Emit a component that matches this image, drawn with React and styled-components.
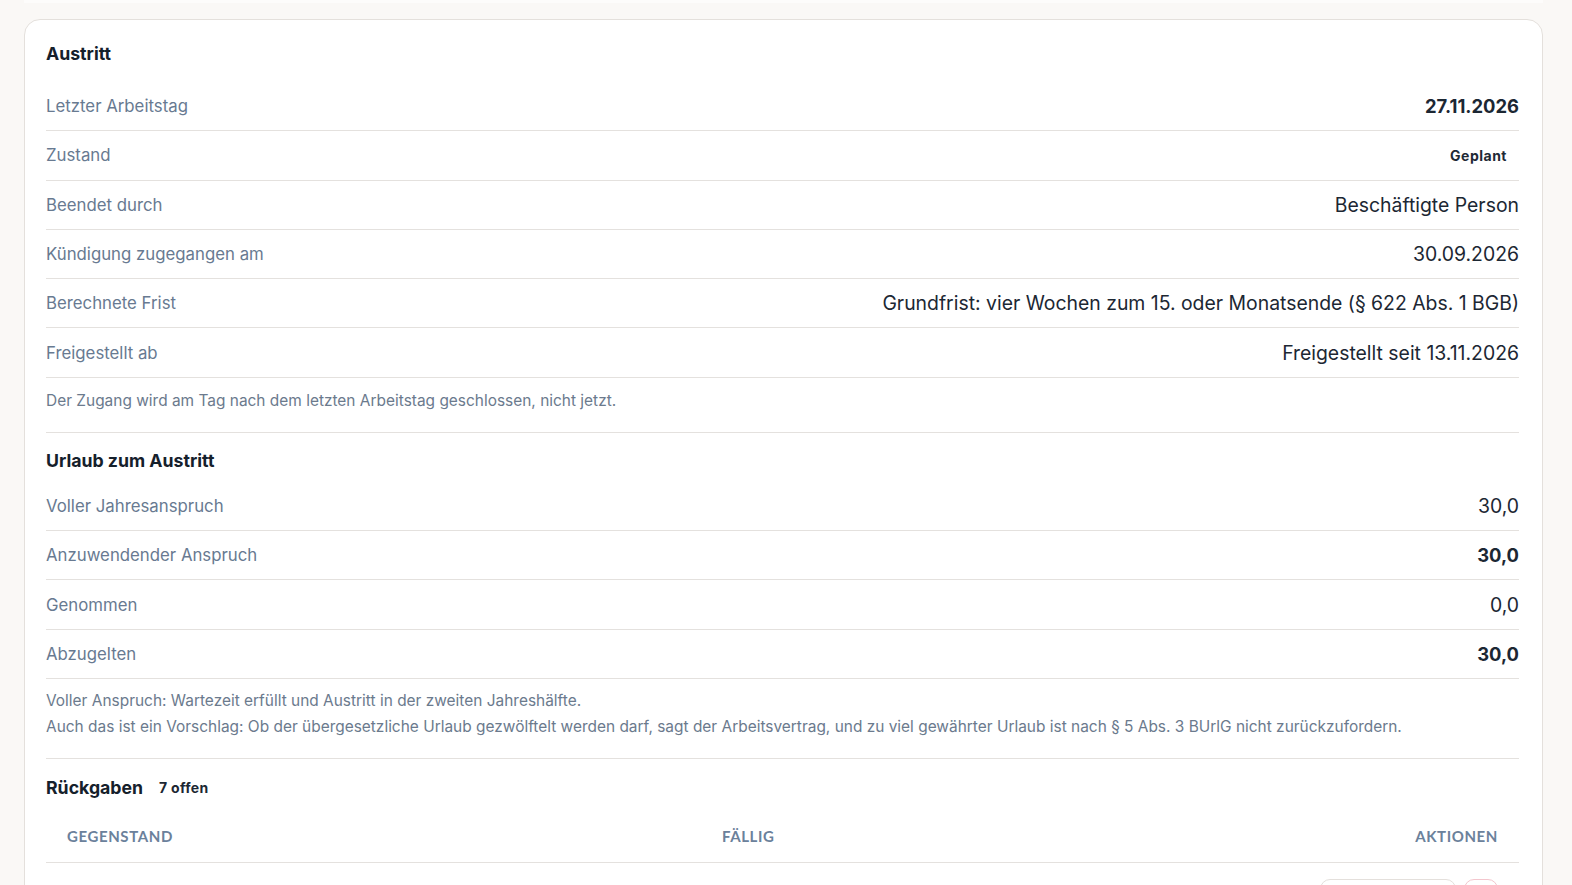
import styled, { createGlobalStyle } from "styled-components";

const GlobalStyle = createGlobalStyle`
  html, body {
    margin: 0;
    background: #faf8f6;
  }
  body {
    font-family: "Inter", "Noto Sans", sans-serif;
    color: #1c2733;
  }
  * {
    box-sizing: border-box;
  }
`;

const Page = styled.div`
  padding: 0 29px 0 24px;
  overflow: hidden;
  height: 885px;
`;

const PrevEdge = styled.div`
  height: 3px;
  background: #fdfcfb;
  margin-bottom: 16px;
`;

const Card = styled.div`
  background: #fff;
  border: 1px solid #e4e0dc;
  border-radius: 16px;
  padding: 22px 23px 0 21px;
`;

const Section = styled.section`
  border-bottom: ${(p) => (p.$last ? "none" : "1px solid #e4e1de")};
  padding-bottom: ${(p) => (p.$last ? "0" : "18px")};
  padding-top: ${(p) => (p.$first ? "0" : p.$top || "16px")};
`;

const Heading = styled.h3`
  display: flex;
  align-items: center;
  gap: 16px;
  margin: 0 0 ${(p) => p.$gap || "16px"};
  font-size: 17.7px;
  line-height: 24px;
  font-weight: 700;
  color: #15202b;
`;

const Count = styled.span`
  font-size: 14px;
  font-weight: 700;
  letter-spacing: 0.3px;
  color: #1c2733;
`;

const Row = styled.div`
  display: flex;
  justify-content: space-between;
  align-items: center;
  height: 49.3px;
  border-bottom: 1px solid #e4e1de;
`;

const Label = styled.span`
  font-size: 16.8px;
  color: #687a91;
`;

const Value = styled.span`
  font-size: ${(p) => (p.$bold ? "18.4px" : "19.4px")};
  font-weight: ${(p) => (p.$bold ? 700 : 400)};
  color: #1c2733;
`;

const Badge = styled.span`
  font-size: 14px;
  font-weight: 700;
  letter-spacing: 0.5px;
  padding: 4px 12px;
  border-radius: 999px;
  color: #1f2a36;
`;

const Note = styled.p`
  margin: ${(p) => p.$top || "0"} 0 0;
  font-size: 15.45px;
  line-height: 26px;
  color: #6b7a8d;
`;

const Table = styled.div`
  margin-top: 0;
`;

const TableRow = styled.div`
  display: grid;
  grid-template-columns: 655px 1fr auto;
  align-items: center;
  border-bottom: 1px solid #e4e1de;
  padding: ${(p) => (p.$head ? "12px 21px 18px" : "16px 21px")};
`;

const Th = styled.span`
  font-family: "Lato", "Liberation Sans", sans-serif;
  font-size: 15px;
  line-height: 16px;
  font-weight: 700;
  letter-spacing: 0.6px;
  text-transform: uppercase;
  color: #6b819b;
  text-align: ${(p) => p.$align || "left"};
`;

const Cell = styled.span`
  min-height: 1px;
`;

const Actions = styled.div`
  display: flex;
  gap: 8px;
  justify-content: flex-end;
`;

const Button = styled.button`
  height: 34px;
  width: ${(p) => (p.$icon ? "34px" : "136px")};
  border-radius: 10px;
  background: #fff;
  border: 1px solid ${(p) => (p.$danger ? "#f3c6cd" : "#e4e0dc")};
  cursor: pointer;
`;

const exitRows = [
  { label: "Letzter Arbeitstag", value: "27.11.2026", bold: true },
  { label: "Zustand", badge: "Geplant" },
  { label: "Beendet durch", value: "Beschäftigte Person" },
  { label: "Kündigung zugegangen am", value: "30.09.2026" },
  {
    label: "Berechnete Frist",
    value: "Grundfrist: vier Wochen zum 15. oder Monatsende (§ 622 Abs. 1 BGB)",
  },
  { label: "Freigestellt ab", value: "Freigestellt seit 13.11.2026" },
];

const vacationRows = [
  { label: "Voller Jahresanspruch", value: "30,0" },
  { label: "Anzuwendender Anspruch", value: "30,0", bold: true },
  { label: "Genommen", value: "0,0" },
  { label: "Abzugelten", value: "30,0", bold: true },
];

function InfoRow({ label, value, bold, badge }) {
  return (
    <Row>
      <Label>{label}</Label>
      {badge ? <Badge>{badge}</Badge> : <Value $bold={bold}>{value}</Value>}
    </Row>
  );
}

export default function App() {
  return (
    <>
      <GlobalStyle />
      <Page>
        <PrevEdge />
        <Card>
          <Section $first>
            <Heading>Austritt</Heading>
            {exitRows.map((r) => (
              <InfoRow key={r.label} {...r} />
            ))}
            <Note $top="10px">
              Der Zugang wird am Tag nach dem letzten Arbeitstag geschlossen, nicht jetzt.
            </Note>
          </Section>

          <Section>
            <Heading $gap="9px">Urlaub zum Austritt</Heading>
            {vacationRows.map((r) => (
              <InfoRow key={r.label} {...r} />
            ))}
            <Note $top="9px">
              Voller Anspruch: Wartezeit erfüllt und Austritt in der zweiten Jahreshälfte.
            </Note>
            <Note>
              Auch das ist ein Vorschlag: Ob der übergesetzliche Urlaub gezwölftelt werden darf,
              sagt der Arbeitsvertrag, und zu viel gewährter Urlaub ist nach § 5 Abs. 3 BUrlG
              nicht zurückzufordern.
            </Note>
          </Section>

          <Section $last $top="17px">
            <Heading $gap="16px">
              Rückgaben <Count>7 offen</Count>
            </Heading>
            <Table>
              <TableRow $head>
                <Th>Gegenstand</Th>
                <Th>Fällig</Th>
                <Th $align="right">Aktionen</Th>
              </TableRow>
              <TableRow>
                <Cell />
                <Cell />
                <Actions>
                  <Button aria-label="Als zurückgegeben markieren" />
                  <Button $icon $danger aria-label="Entfernen" />
                </Actions>
              </TableRow>
            </Table>
          </Section>
        </Card>
      </Page>
    </>
  );
}
